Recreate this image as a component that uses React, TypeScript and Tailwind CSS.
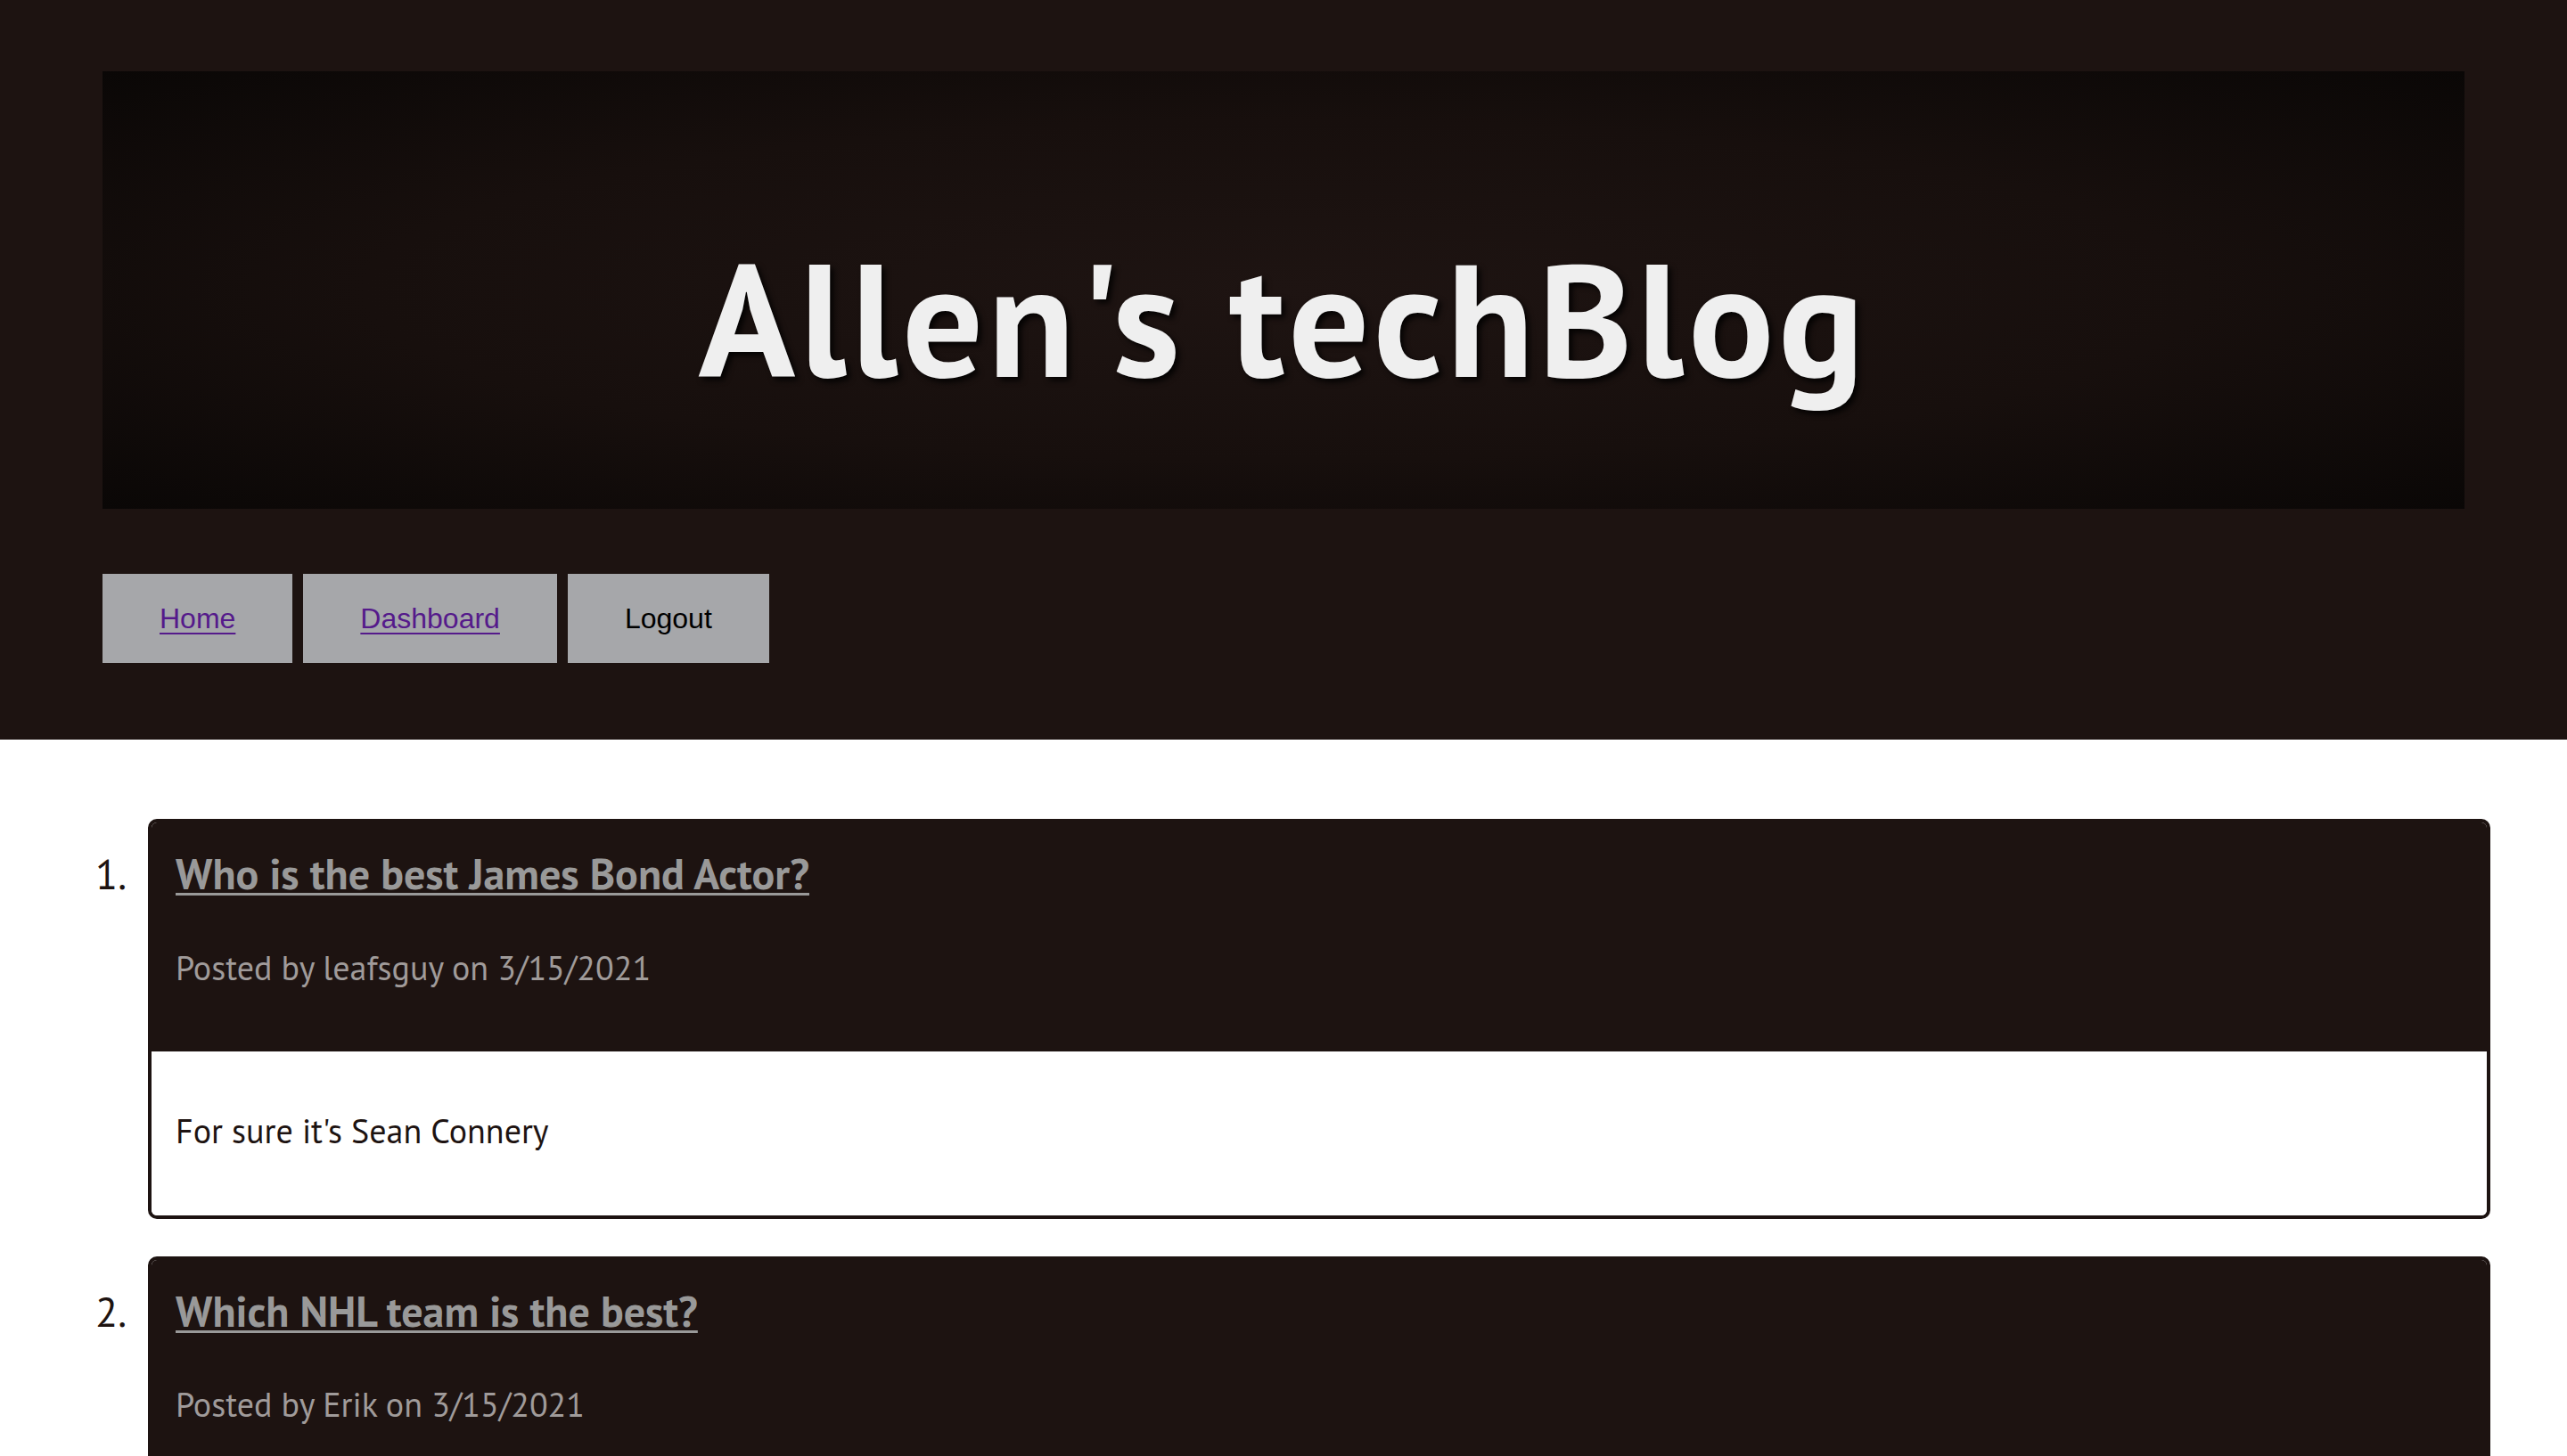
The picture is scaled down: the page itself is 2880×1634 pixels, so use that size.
import { useState } from 'react'

type Post = {
    id: number
    title: string
    author: string
    date: string
    body: string
}

const posts: Post[] = [
    {
        id: 1,
        title: 'Who is the best James Bond Actor?',
        author: 'leafsguy',
        date: '3/15/2021',
        body: "For sure it's Sean Connery",
    },
    {
        id: 2,
        title: 'Which NHL team is the best?',
        author: 'Erik',
        date: '3/15/2021',
        body: 'The Toronto Maple Leafs, obviously',
    },
]

const blogFont = "font-['PT_Sans',Lato,'Open_Sans',sans-serif]"

function NavButton({ label, link }: { label: string; link?: boolean }) {
    return (
        <div className="flex h-[100px] items-center bg-[#a6a7aa] px-[64px] font-['Liberation_Sans',Arial,sans-serif] text-[32px]">
            {link ? (
                <a href="#" className="text-[#551a8b] underline decoration-[2px] underline-offset-[5px]">
                    {label}
                </a>
            ) : (
                <span className="text-black">{label}</span>
            )}
        </div>
    )
}

function PostCard({ post, index }: { post: Post; index: number }) {
    return (
        <li className="flex items-baseline">
            <span className={`w-[80px] shrink-0 pr-[24px] text-right text-[46px] leading-[1.2] text-[#1d1311] ${blogFont}`}>
                {index}.
            </span>
            <div className="flex-1 overflow-hidden rounded-[10px] border-[4px] border-[#1d1311]">
                <div className="bg-[#1d1311] px-[27px] pt-[29px] pb-[72px]">
                    <a
                        href="#"
                        className={`block w-fit text-[48px] font-bold leading-[1.2] text-[#999999] underline decoration-[3px] underline-offset-[4px] ${blogFont}`}
                    >
                        {post.title}
                    </a>
                    <p className={`mt-[53px] text-[38px] leading-[1.2] text-[#a09b9a] ${blogFont}`}>
                        Posted by {post.author} on {post.date}
                    </p>
                </div>
                <div className="bg-white px-[27px] pt-[66px] pb-[72px]">
                    <p className={`text-[38px] leading-[1.2] text-[#1d1311] ${blogFont}`}>{post.body}</p>
                </div>
            </div>
        </li>
    )
}

function App() {
    const [loggedIn] = useState(true)

    return (
        <div className="min-h-screen bg-white">
            <header className="bg-[#1d1311] px-[115px] pt-[80px] pb-[86px]">
                <div className="flex h-[491px] justify-center bg-[radial-gradient(ellipse_at_center,#1e1412_0%,#170f0d_55%,#0a0706_100%)] pt-[170px]">
                    <h1
                        className={`text-[179px] font-bold leading-[1.2] tracking-[5px] text-[#efefef] [text-shadow:4px_4px_6px_rgba(0,0,0,0.85)] ${blogFont}`}
                    >
                        Allen's techBlog
                    </h1>
                </div>
                <nav className="mt-[73px] flex gap-[12px]">
                    <NavButton label="Home" link />
                    <NavButton label="Dashboard" link />
                    {loggedIn && <NavButton label="Logout" />}
                </nav>
            </header>

            <main className="px-[86px] pt-[89px] pb-[60px]">
                <ol className="flex flex-col gap-[42px]">
                    {posts.map((post, i) => (
                        <PostCard key={post.id} post={post} index={i + 1} />
                    ))}
                </ol>
            </main>
        </div>
    )
}

export default App
